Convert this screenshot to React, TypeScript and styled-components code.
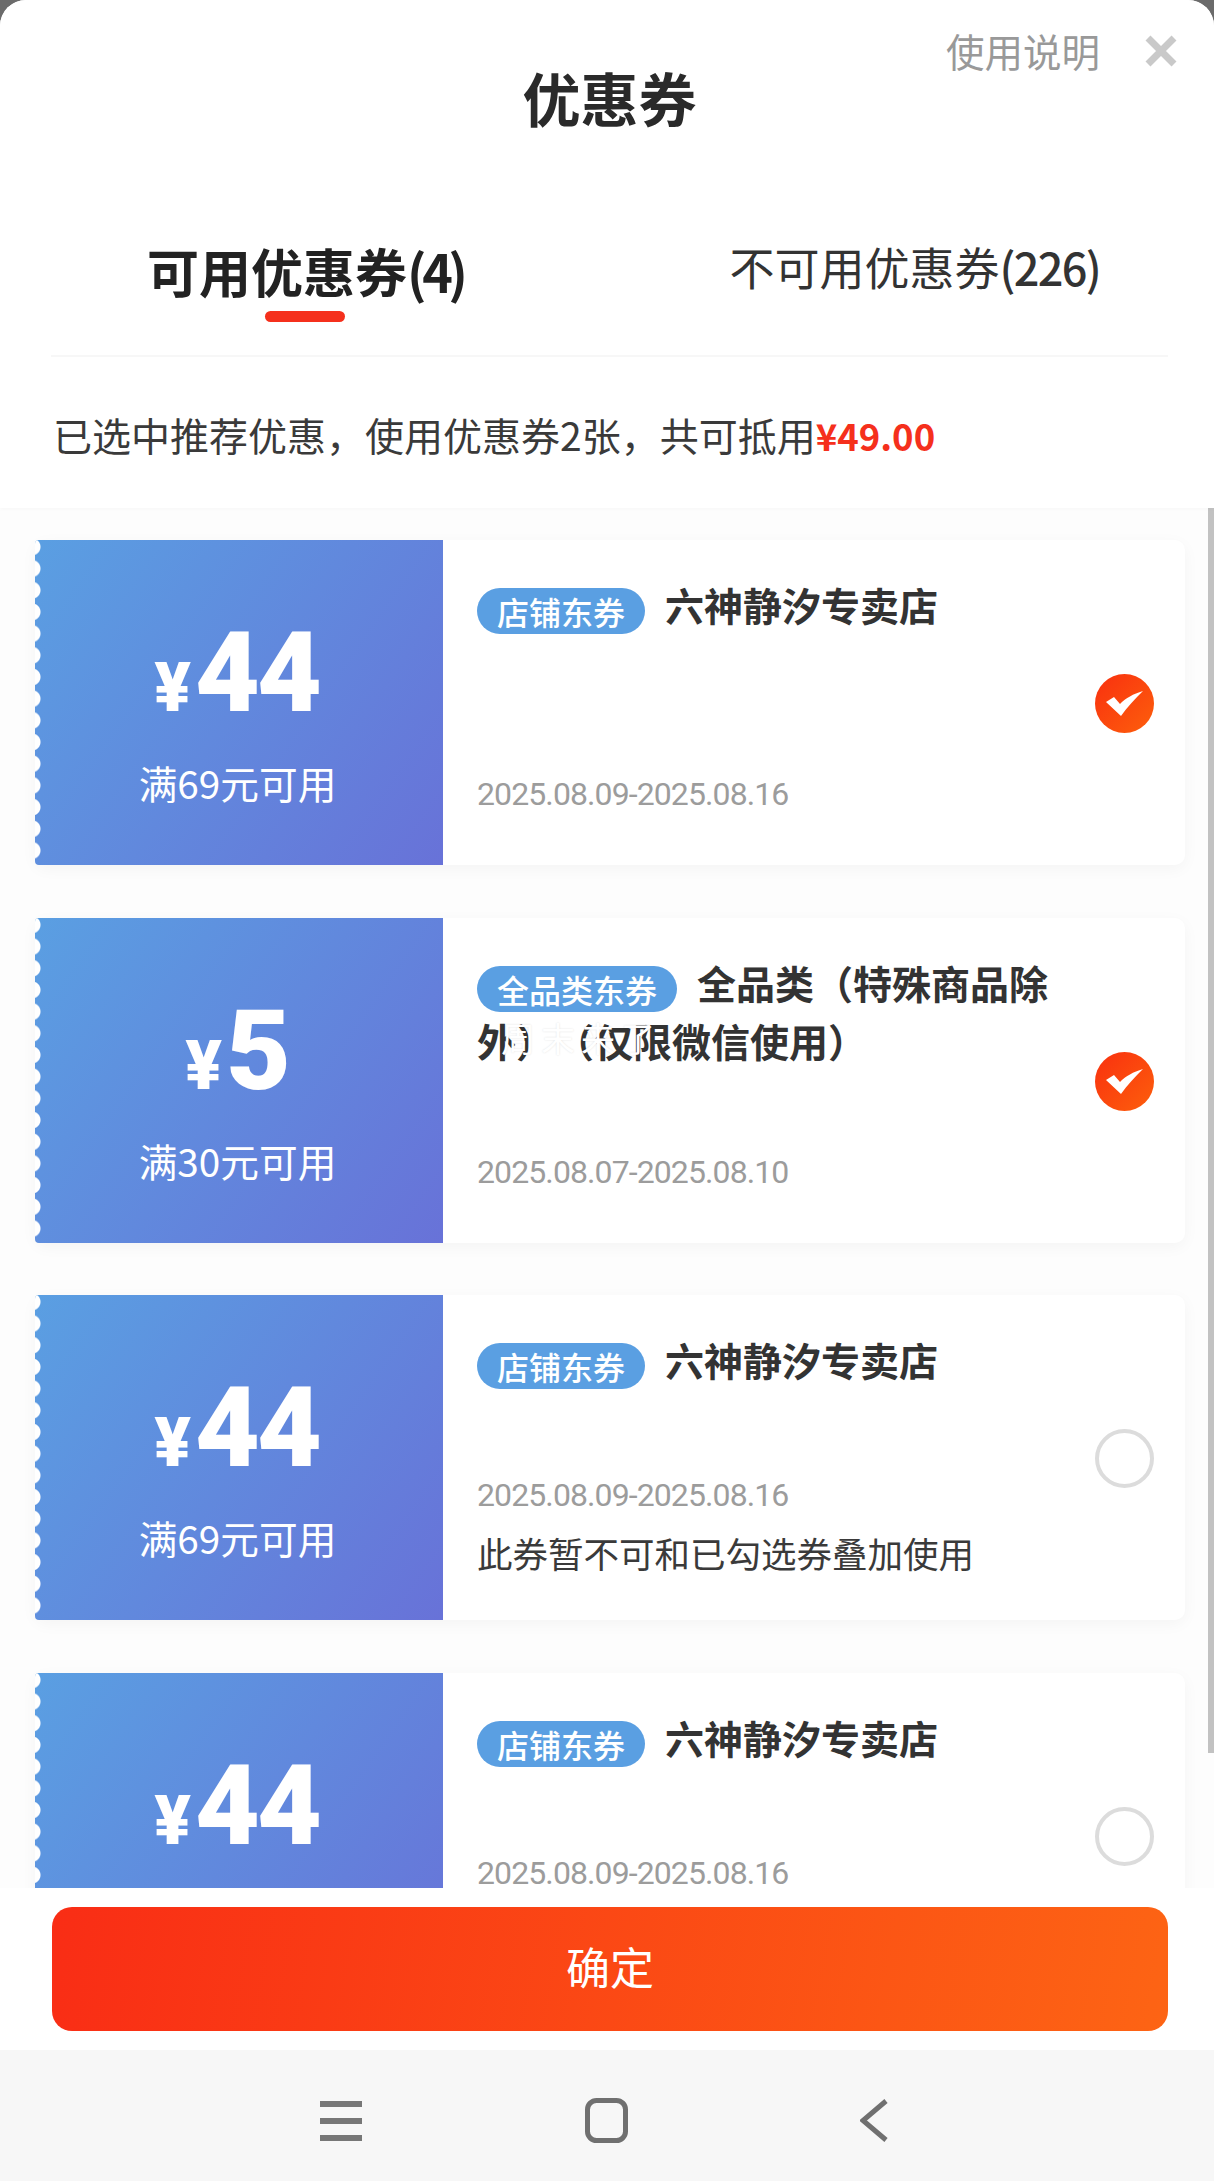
import React from 'react';
import styled, { createGlobalStyle } from 'styled-components';

type Coupon = {
  amount: string;
  condition: string;
  tag: string;
  title: string;
  date: string;
  checked: boolean;
  note?: string;
  stamp?: string;
};

const COUPONS: Coupon[] = [
  {
    amount: '44',
    condition: '满69元可用',
    tag: '店铺东券',
    title: '六神静汐专卖店',
    date: '2025.08.09-2025.08.16',
    checked: true,
  },
  {
    amount: '5',
    condition: '满30元可用',
    tag: '全品类东券',
    title: '全品类（特殊商品除外）（仅限微信使用）',
    date: '2025.08.07-2025.08.10',
    checked: true,
    stamp: '周末来了',
  },
  {
    amount: '44',
    condition: '满69元可用',
    tag: '店铺东券',
    title: '六神静汐专卖店',
    date: '2025.08.09-2025.08.16',
    checked: false,
    note: '此券暂不可和已勾选券叠加使用',
  },
  {
    amount: '44',
    condition: '满69元可用',
    tag: '店铺东券',
    title: '六神静汐专卖店',
    date: '2025.08.09-2025.08.16',
    checked: false,
    note: '此券暂不可和已勾选券叠加使用',
  },
];

const App: React.FC = () => (
  <>
    <GlobalStyle />
    <Screen>
      <Sheet>
        <Header>
          <TopRow>
            <HelpLink>使用说明</HelpLink>
            <CloseIcon viewBox="0 0 32 32">
              <path d="M3 3 L29 29 M29 3 L3 29" />
            </CloseIcon>
          </TopRow>
          <Title>优惠券</Title>
          <Tabs>
            <ActiveTab>
              可用优惠券<ActiveCount>(4)</ActiveCount>
              <TabMark />
            </ActiveTab>
            <Tab>
              不可用优惠券<TabCount>(226)</TabCount>
            </Tab>
          </Tabs>
          <Summary>
            已选中推荐优惠，使用优惠券2张，共可抵用<Saved>¥49.00</Saved>
          </Summary>
        </Header>
        <CouponList>
          <ScrollThumb />
          {COUPONS.map((coupon, index) => (
            <CouponCard key={index}>
              <Face>
                <Price>
                  <Yen>¥</Yen>
                  <Amount>{coupon.amount}</Amount>
                </Price>
                <Condition>{coupon.condition}</Condition>
              </Face>
              <Details>
                <Info>
                  <CouponTitle>
                    <Tag>{coupon.tag}</Tag>
                    {coupon.title}
                    {coupon.stamp && <Stamp>{coupon.stamp}</Stamp>}
                  </CouponTitle>
                  <Bottom>
                    <DateRange>{coupon.date}</DateRange>
                    {coupon.note && <Note>{coupon.note}</Note>}
                  </Bottom>
                </Info>
                {coupon.checked ? (
                  <CheckedMark viewBox="0 0 59 59">
                    <defs>
                      <linearGradient id={`check-${index}`} x1="0" y1="0" x2="1" y2="1">
                        <stop offset="0" stopColor="#f9300f" />
                        <stop offset="1" stopColor="#fd5f0c" />
                      </linearGradient>
                    </defs>
                    <circle cx="29.5" cy="29.5" r="29.5" fill={`url(#check-${index})`} />
                    <path d="M11 28 L19 23 L25 30 C31 24 38 20 48 17 C40 25 32 33 26 42 Z" fill="#fff" />
                  </CheckedMark>
                ) : (
                  <EmptyMark />
                )}
              </Details>
            </CouponCard>
          ))}
        </CouponList>
        <Footer>
          <ConfirmButton>确定</ConfirmButton>
        </Footer>
      </Sheet>
      <NavBar>
        <MenuIcon viewBox="0 0 42 40">
          <path d="M0 3 H42 M0 20 H42 M0 37 H42" />
        </MenuIcon>
        <HomeIcon viewBox="0 0 43 45">
          <rect x="2.5" y="2.5" width="38" height="40" rx="9" />
        </HomeIcon>
        <BackIcon viewBox="0 0 28 43">
          <path d="M26 2 L3 21.5 L26 41" />
        </BackIcon>
      </NavBar>
    </Screen>
  </>
);

export default App;

const GlobalStyle = createGlobalStyle`
  html, body {
    margin: 0;
    padding: 0;
    background: #6b6b6b;
  }
  body {
    font-family: "Noto Sans CJK SC", "Noto Sans", Roboto, sans-serif;
    text-spacing-trim: space-all;
  }
`;

const Screen = styled.div`
  width: 1214px;
  height: 2181px;
  display: flex;
  flex-direction: column;
  overflow: hidden;
`;

const Sheet = styled.div`
  flex: 1;
  min-height: 0;
  display: flex;
  flex-direction: column;
  background: #fff;
  border-radius: 26px 26px 0 0;
  overflow: hidden;
`;

const Header = styled.div`
  height: 508px;
  flex-shrink: 0;
  padding: 0 46px 0 51px;
  position: relative;
  box-sizing: border-box;
  background: #fff;
  z-index: 2;
  box-shadow: 0 1px 4px rgba(0, 0, 0, 0.03);
`;

const TopRow = styled.div`
  position: absolute;
  top: 27px;
  right: 37px;
  display: flex;
  align-items: center;
  gap: 45px;
`;

const HelpLink = styled.span`
  font-size: 38.5px;
  line-height: 46px;
  color: #999;
`;

const CloseIcon = styled.svg`
  width: 32px;
  height: 32px;
  margin-top: 2px;
  fill: none;
  stroke: #c9c9c9;
  stroke-width: 7px;
`;

const Title = styled.h1`
  margin: 0;
  padding-top: 61px;
  font-size: 58px;
  line-height: 72px;
  font-weight: 700;
  color: #2a2a2a;
  text-align: center;
`;

const Tabs = styled.div`
  margin-top: 105px;
  height: 117px;
  padding: 0 68px 0 96px;
  display: flex;
  justify-content: space-between;
  align-items: flex-start;
  border-bottom: 2px solid #f7f7f7;
`;

const ActiveTab = styled.div`
  position: relative;
  font-size: 52px;
  line-height: 66px;
  font-weight: 700;
  color: #222;
`;

const ActiveCount = styled.span`
  letter-spacing: -4.5px;
`;

const TabMark = styled.i`
  position: absolute;
  left: 118px;
  top: 73px;
  width: 80px;
  height: 11px;
  border-radius: 6px;
  background: #f5301c;
`;

const Tab = styled.div`
  font-size: 45px;
  line-height: 58px;
  font-weight: 400;
  color: #333;
`;

const TabCount = styled.span`
  font-weight: 500;
  letter-spacing: -1.7px;
`;

const Summary = styled.p`
  margin: 0;
  padding: 54px 0 0 2px;
  font-size: 39px;
  line-height: 46px;
  color: #3a3a3a;
  white-space: nowrap;
`;

const Saved = styled.span`
  color: #f5301c;
  font-size: 36.5px;
  font-weight: 700;
`;

const CouponList = styled.div`
  position: relative;
  flex: 1;
  min-height: 0;
  padding: 32px 29px 0 35px;
  display: flex;
  flex-direction: column;
  gap: 52.5px;
  overflow: hidden;
  background: #fdfdfd;
`;

const ScrollThumb = styled.div`
  position: absolute;
  top: 0;
  right: 0;
  width: 6px;
  height: 1245px;
  background: #c2c2c2;
`;

const CouponCard = styled.div`
  flex-shrink: 0;
  height: 325px;
  display: flex;
  background: #fff;
  border-radius: 10px;
  box-shadow: 0 4px 16px rgba(0, 0, 0, 0.04);
`;

const Face = styled.div`
  position: relative;
  width: 408px;
  flex-shrink: 0;
  display: flex;
  flex-direction: column;
  align-items: center;
  color: #fff;
  background: linear-gradient(125deg, #5a9fe2, #6872d8);
  border-radius: 4px 0 0 4px;
  overflow: hidden;

  /* perforated left edge */
  &::before {
    content: '';
    position: absolute;
    left: 0;
    top: -4px;
    bottom: 0;
    width: 10px;
    background: radial-gradient(circle at -3px 50%, #fff 8px, transparent 9px) 0 0 / 10px 21.7px repeat-y;
  }
`;

const Price = styled.div`
  margin: 68px 5px 0 0;
  height: 130px;
  display: flex;
  align-items: baseline;
  font-family: Roboto, "Liberation Sans", sans-serif;
  font-weight: 900;
`;

const Yen = styled.span`
  font-size: 68px;
  line-height: 130px;
  margin-right: 4px;
`;

const Amount = styled.span`
  font-size: 112px;
  line-height: 130px;
  letter-spacing: -3px;
`;

const Condition = styled.div`
  margin: 20px 3px 0 0;
  font-size: 38.7px;
  line-height: 48px;
  font-weight: 400;
`;

const Details = styled.div`
  flex: 1;
  min-width: 0;
  display: flex;
  align-items: center;
  padding: 0 31px 0 34px;
`;

const Info = styled.div`
  flex: 1;
  min-width: 0;
  height: 100%;
  display: flex;
  flex-direction: column;
  justify-content: space-between;
  box-sizing: border-box;
  padding: 36px 30px 49px 0;
`;

const CouponTitle = styled.div`
  position: relative;
  font-size: 39px;
  line-height: 57px;
  font-weight: 700;
  color: #333;
`;

const Tag = styled.span`
  display: inline-block;
  height: 46px;
  padding: 0 20px;
  margin-right: 20px;
  border-radius: 23px;
  background: #5a9fe2;
  color: #fff;
  font-size: 32px;
  line-height: 46px;
  font-weight: 500;
  vertical-align: -4px;
`;

// white caption laid across the second title line
const Stamp = styled.span`
  position: absolute;
  left: 24px;
  top: 55px;
  font-size: 34px;
  letter-spacing: 6px;
  line-height: 57px;
  font-weight: 400;
  color: #fff;
  text-shadow: 0 0 2px rgba(0, 0, 0, 0.12);
  white-space: nowrap;
`;

const Bottom = styled.div`
  display: flex;
  flex-direction: column;
`;

const DateRange = styled.div`
  font-family: Roboto, "Noto Sans", sans-serif;
  font-size: 32px;
  letter-spacing: -0.9px;
  line-height: 44px;
  color: #9c9c9c;
  white-space: nowrap;
`;

const Note = styled.div`
  margin-top: 18px;
  font-size: 35.5px;
  line-height: 36px;
  color: #3a3a3a;
  white-space: nowrap;
`;

const CheckedMark = styled.svg`
  width: 59px;
  height: 59px;
  flex-shrink: 0;
  margin-top: 2px;
`;

const EmptyMark = styled.span`
  width: 59px;
  height: 59px;
  flex-shrink: 0;
  margin-top: 2px;
  box-sizing: border-box;
  border: 4px solid #dcdcdc;
  border-radius: 50%;
`;

const Footer = styled.div`
  position: relative;
  flex-shrink: 0;
  height: 162px;
  padding: 19px 46px 0 52px;
  box-sizing: border-box;
  background: #fff;
`;

const ConfirmButton = styled.button`
  display: block;
  width: 100%;
  height: 124px;
  padding: 0 0 6px;
  border: 0;
  border-radius: 20px;
  background: linear-gradient(100deg, #f92d15, #fd6414);
  color: #fff;
  font-family: inherit;
  font-size: 44px;
  font-weight: 400;
`;

const NavBar = styled.div`
  flex-shrink: 0;
  height: 131px;
  box-sizing: border-box;
  background: #f7f7f7;
  display: flex;
  align-items: center;
  padding: 10px 0 0 320px;
`;

const MenuIcon = styled.svg`
  width: 42px;
  height: 40px;
  fill: none;
  stroke: #777;
  stroke-width: 6px;
`;

const HomeIcon = styled.svg`
  width: 43px;
  height: 45px;
  margin-left: 223px;
  fill: none;
  stroke: #707070;
  stroke-width: 5px;
`;

const BackIcon = styled.svg`
  width: 28px;
  height: 43px;
  margin-left: 232px;
  fill: none;
  stroke: #707070;
  stroke-width: 5px;
`;
